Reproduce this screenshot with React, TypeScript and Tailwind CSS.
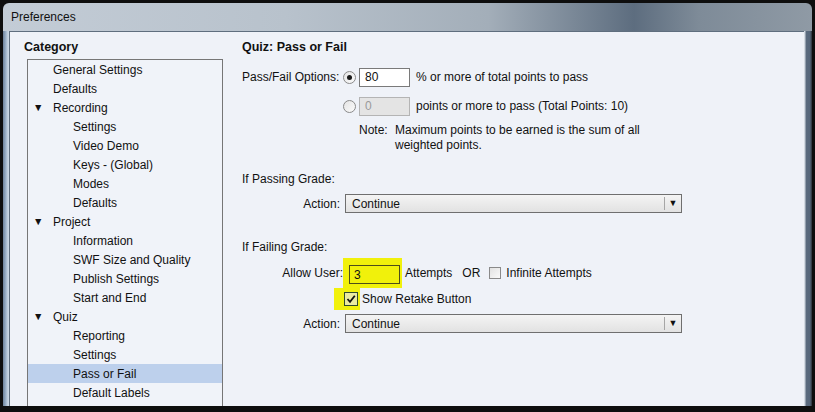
import React from 'react'

type TreeItem = { label: string; level: 0 | 1; expanded?: boolean; selected?: boolean }

const tree: TreeItem[] = [
    { label: 'General Settings', level: 0 },
    { label: 'Defaults', level: 0 },
    { label: 'Recording', level: 0, expanded: true },
    { label: 'Settings', level: 1 },
    { label: 'Video Demo', level: 1 },
    { label: 'Keys - (Global)', level: 1 },
    { label: 'Modes', level: 1 },
    { label: 'Defaults', level: 1 },
    { label: 'Project', level: 0, expanded: true },
    { label: 'Information', level: 1 },
    { label: 'SWF Size and Quality', level: 1 },
    { label: 'Publish Settings', level: 1 },
    { label: 'Start and End', level: 1 },
    { label: 'Quiz', level: 0, expanded: true },
    { label: 'Reporting', level: 1 },
    { label: 'Settings', level: 1 },
    { label: 'Pass or Fail', level: 1, selected: true },
    { label: 'Default Labels', level: 1 },
]

const Radio = ({ checked }: { checked?: boolean }) => (
    <span className="w-[13px] h-[13px] rounded-full border border-[#8a8a8a] bg-gradient-to-br from-[#e4e4e4] to-[#fbfbfb] flex items-center justify-center shrink-0">
        {checked && <span className="w-[5px] h-[5px] rounded-full bg-[#1a1a1a]" />}
    </span>
)

const Select = ({ value }: { value: string }) => (
    <div className="w-[337px] h-[19px] border border-[#6f6f6f] bg-gradient-to-b from-[#f4f4f4] to-[#e2e2e2] flex items-center">
        <span className="flex-1 pl-[6px]">{value}</span>
        <span className="w-px h-[13px] bg-[#a6a6a6]" />
        <span className="w-[16px] flex justify-center text-[9px] leading-none text-[#111]">▼</span>
    </div>
)

export default function App() {
    return (
        <div
            className="w-[815px] h-[412px] bg-[#0e0e0e] pt-[3px] pl-[3px] overflow-hidden text-[12px] text-[#111]"
            style={{ fontFamily: '"Liberation Sans", Arial, sans-serif' }}
        >
            <div className="w-[809px] h-[403px] flex flex-col rounded-t-[6px] overflow-hidden">
                {/* title bar */}
                <div className="h-[28px] shrink-0 flex items-center pl-[8px] bg-[linear-gradient(90deg,#c3ccd6_0%,#b8c2cc_35%,#a3aeb9_60%,#5d6d7f_78%,#7e8b98_86%,#8f9aa5_100%)]">
                    <span className="text-[12px] text-[#111]">Preferences</span>
                </div>
                <div className="flex-1 flex min-h-0">
                    {/* left frame */}
                    <div className="w-[6px] bg-[linear-gradient(90deg,#6f839b_0%,#8ea4bc_35%,#b9c9d9_70%,#cfdbe6_100%)]" />
                    {/* content */}
                    <div className="w-[795px] border-l border-t border-[#5f6e7e] bg-[#eff2f8] flex pl-[14px] pt-[7px] overflow-hidden">
                        {/* category column */}
                        <div className="w-[199px] shrink-0 flex flex-col">
                            <div className="h-[16px] leading-[16px] font-bold text-[12.5px]">Category</div>
                            <div className="mt-[4px] ml-[3px] w-[196px] flex-1 border border-[#767676] border-b-0 bg-[#f0f3f9]">
                                {tree.map((item, i) => (
                                    <div
                                        key={i}
                                        className={`h-[19px] flex items-center ${item.selected ? 'bg-[#bdd0ec]' : ''}`}
                                    >
                                        <span className="w-[25px] pl-[5px] text-[10.5px] leading-none">
                                            {item.expanded ? '▼' : ''}
                                        </span>
                                        <span className={item.level === 1 ? 'pl-[20px]' : ''}>{item.label}</span>
                                    </div>
                                ))}
                            </div>
                        </div>
                        {/* settings column */}
                        <div className="ml-[19px] flex flex-col">
                            <div className="h-[16px] leading-[16px] font-bold text-[12.5px]">Quiz: Pass or Fail</div>
                            <div className="mt-[12px] h-[20px] flex items-center">
                                <span className="w-[101px]">Pass/Fail Options:</span>
                                <Radio checked />
                                <span className="ml-[3px] w-[51px] h-[19px] border border-[#7a7a7a] bg-white flex items-center pl-[5px]">80</span>
                                <span className="ml-[6px]">% or more of total points to pass</span>
                            </div>
                            <div className="mt-[9px] h-[20px] flex items-center">
                                <span className="w-[101px]" />
                                <Radio />
                                <span className="ml-[3px] w-[51px] h-[19px] border border-[#b4b4b4] bg-[#e4e4e4] text-[#9a9a9a] flex items-center pl-[5px]">0</span>
                                <span className="ml-[6px]">points or more to pass (Total Points: 10)</span>
                            </div>
                            <div className="mt-[7px] flex leading-[15px]">
                                <span className="w-[117px]" />
                                <span className="w-[36px]">Note:</span>
                                <span>
                                    Maximum points to be earned is the sum of all
                                    <br />
                                    weighted points.
                                </span>
                            </div>
                            <div className="mt-[18px] h-[16px] leading-[16px]">If Passing Grade:</div>
                            <div className="mt-[7px] h-[19px] flex items-center">
                                <span className="w-[100px] text-right pr-[2px]">Action:</span>
                                <span className="ml-[3px]"><Select value="Continue" /></span>
                            </div>
                            <div className="mt-[26px] h-[16px] leading-[16px]">If Failing Grade:</div>
                            <div className="mt-[3px] h-[30px] flex items-center">
                                <span className="w-[101px] text-right">Allow User:</span>
                                <span className="h-[30px] w-[59px] bg-[#f1f10b] flex items-start pt-[7px] pl-[6px]">
                                    <span className="w-[51px] h-[19px] border border-[#4d4d1a] flex items-center pl-[4px]">3</span>
                                </span>
                                <span className="ml-[3px]">Attempts</span>
                                <span className="ml-[10px]">OR</span>
                                <span className="ml-[9px] w-[12px] h-[12px] border border-[#8a8a8a] bg-gradient-to-br from-[#e2e2e2] to-[#fafafa]" />
                                <span className="ml-[5px]">Infinite Attempts</span>
                            </div>
                            <div className="h-[22px] flex items-center">
                                <span className="w-[92px]" />
                                <span className="h-[22px] w-[26px] bg-[#f1f10b] flex items-center pl-[10px]">
                                    <span className="w-[14px] h-[14px] border border-[#2f4a2f] bg-[#eaeaa0] flex items-center justify-center">
                                        <svg width="10" height="10" viewBox="0 0 10 10">
                                            <path d="M1.5 5 L4 7.8 L8.8 1.8" fill="none" stroke="#111" strokeWidth="1.8" />
                                        </svg>
                                    </span>
                                </span>
                                <span className="ml-[2px]">Show Retake Button</span>
                            </div>
                            <div className="mt-[4px] h-[19px] flex items-center">
                                <span className="w-[100px] text-right pr-[2px]">Action:</span>
                                <span className="ml-[3px]"><Select value="Continue" /></span>
                            </div>
                        </div>
                    </div>
                    {/* right frame */}
                    <div className="w-[8px] bg-[linear-gradient(90deg,#d3dae2_0%,#d3dae2_12%,#5b6b7e_25%,#56677b_75%,#2a2f35_100%)]" />
                </div>
            </div>
        </div>
    )
}
